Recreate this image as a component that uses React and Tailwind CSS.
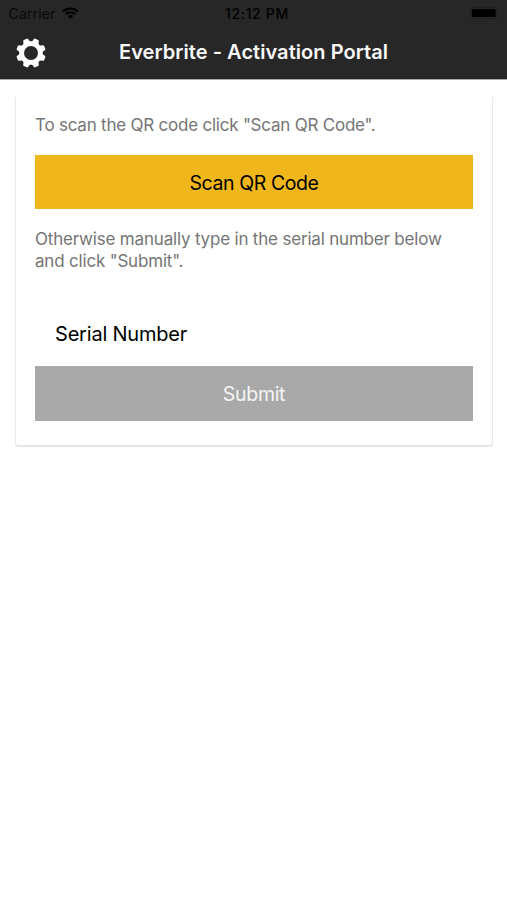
import React from "react";

const TEETH = [22.5, 67.5, 112.5, 157.5, 202.5, 247.5, 292.5, 337.5];

function GearIcon() {
  return (
    <svg width="30" height="30" viewBox="-15 -15 30 30">
      <circle r="9.250" fill="none" stroke="#fff" strokeWidth="4.500" />
      {TEETH.map((angle) => (
        <path
          key={angle}
          d="M-4.400-10.300Q-3-11.300-2.700-13.800Q-2.600-14.800-1.600-14.800H1.600Q2.600-14.800 2.700-13.800Q3-11.300 4.400-10.300Z"
          fill="#fff"
          transform={`rotate(${angle})`}
        />
      ))}
    </svg>
  );
}

function StatusBar() {
  return (
    <div className="relative flex h-[27px] items-center justify-between pl-[8.5px] pr-[7px] text-[14px] text-black">
      <div className="flex items-center gap-[7px]">
        <span className="tracking-[0.15px] text-[#080808]">Carrier</span>
        <svg className="-mt-[2px]" width="17" height="12" viewBox="0 0 17 12" fill="none" stroke="currentColor" strokeWidth="2.200">
          <path d="M1 4.600a10.600 10.600 0 0 1 15 0M3.700 7.300a6.800 6.800 0 0 1 9.600 0" />
          <path d="M8.500 11.800 6 9.300a3.600 3.600 0 0 1 5 0z" fill="currentColor" stroke="none" />
        </svg>
      </div>
      <span className="absolute left-[225px] font-medium tracking-[0.65px]">12:12 PM</span>
      <svg className="-mt-[1px]" width="30" height="12" viewBox="0 0 30 12">
        <rect x="0.500" y="0.500" width="26" height="11" rx="2.500" fill="none" stroke="#1f1f1f" />
        <rect x="1.800" y="2" width="23.700" height="8" rx="1" fill="#000" />
        <path d="M28 4v4q1.500-.5 1.500-2T28 4" fill="#1f1f1f" />
      </svg>
    </div>
  );
}

export default function App() {
  return (
    <div className="h-[900px] w-full bg-white font-['Inter',sans-serif]">
      <header className="h-[80px] border-b border-[#a8a8a8] bg-[#272727]">
        <StatusBar />
        <div className="flex h-[51px] items-center pl-[16px]">
          <GearIcon />
          <h1 className="-mt-[1px] ml-[73px] whitespace-nowrap text-[20px] font-semibold tracking-[0.05px] text-[#fafafa]">
            Everbrite - Activation Portal
          </h1>
        </div>
      </header>
      <main className="ml-[16px] mr-[15px] mt-[16px] h-[349px] rounded-[2px] px-[19px] pt-[18px] text-[17px] leading-[22px] text-[#757575] shadow-[0_1px_1px_1px_rgba(0,0,0,0.1)]">
        <p className="whitespace-nowrap tracking-[-0.22px]">To scan the QR code click "Scan QR Code".</p>
        <button className="mt-[19px] block h-[54px] w-full bg-[#f0b71c] pt-[1px] text-[19.5px] tracking-[-0.42px] text-black">
          Scan QR Code
        </button>
        <p className="mt-[19px] whitespace-nowrap tracking-[-0.19px]">
          Otherwise manually type in the serial number below
          <br />
          and click "Submit".
        </p>
        <div className="mt-[31px] flex h-[63px] items-center pb-[2px] pl-[20px] text-[20px] tracking-[-0.2px] text-black">
          Serial Number
        </div>
        <button className="block h-[55px] w-full bg-[#a9a9a9] text-[19.5px] tracking-[-0.3px] text-[#f5f5f5]">Submit</button>
      </main>
    </div>
  );
}
